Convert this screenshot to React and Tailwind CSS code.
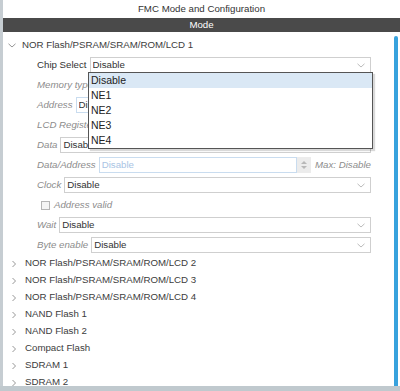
import React from "react";

const font = { fontFamily: '"Liberation Sans", Arial, sans-serif' };

function ChevronRight() {
  return (
    <svg width="6" height="8" viewBox="0 0 6 8" className="shrink-0">
      <path d="M1.5 1 L4.5 4 L1.5 7" fill="none" stroke="#8a8a8a" strokeWidth="0.9" />
    </svg>
  );
}

function ChevronDown({ color = "#8a8a8a" }) {
  return (
    <svg width="8" height="5" viewBox="0 0 8 5" className="shrink-0">
      <path d="M0.5 0.8 L4 4 L7.5 0.8" fill="none" stroke={color} strokeWidth="0.9" />
    </svg>
  );
}

function Select({ value = "Disable", border = "border-[#cfcfcf]" }) {
  return (
    <div className={`flex-1 h-[16px] border ${border} bg-white flex items-center pl-[2px] pr-[5px]`}>
      <span className="flex-1 text-[#333] truncate">{value}</span>
      <ChevronDown color="#b4b4b4" />
    </div>
  );
}

function Row({ label, italic = true, children }) {
  return (
    <div className="flex items-center h-[16px] shrink-0 pl-[34px] pr-[23px]">
      <span className={`${italic ? "italic text-[#8c8c8c]" : "text-[#333]"} mr-[3px] whitespace-nowrap`}>{label}</span>
      {children}
    </div>
  );
}

function Node({ label }) {
  return (
    <div className="flex items-center h-[17px] shrink-0 pl-[8px]">
      <span className="w-[14px] flex justify-start"><ChevronRight /></span>
      <span className="text-[#3c3c3c] whitespace-nowrap">{label}</span>
    </div>
  );
}

export default function App() {
  const nodes = [
    "NOR Flash/PSRAM/SRAM/ROM/LCD 2",
    "NOR Flash/PSRAM/SRAM/ROM/LCD 3",
    "NOR Flash/PSRAM/SRAM/ROM/LCD 4",
    "NAND Flash 1",
    "NAND Flash 2",
    "Compact Flash",
    "SDRAM 1",
    "SDRAM 2",
  ];

  return (
    <div className="w-[400px] h-[391px] bg-white flex flex-col text-[9.7px] overflow-hidden" style={font}>
      <div className="flex flex-1 min-h-0">
        {/* left edge */}
        <div className="w-[3px] bg-[#c6cdd2] shrink-0" />

        <div className="flex-1 flex flex-col min-w-0">
          <div className="h-[18px] shrink-0 flex items-center justify-center text-[#333]">FMC Mode and Configuration</div>
          <div className="h-[14px] shrink-0 bg-[#4a4a4a] flex items-center justify-center text-white">Mode</div>

          <div className="flex flex-1 min-h-0">
            <div className="flex-1 flex flex-col overflow-hidden">
              <div className="flex items-center h-[18px] shrink-0 mt-[4px] pl-[5px]">
                <span className="w-[14px] flex justify-start"><ChevronDown /></span>
                <span className="text-[#3c3c3c] whitespace-nowrap">NOR Flash/PSRAM/SRAM/ROM/LCD 1</span>
              </div>

              <div className="flex flex-col shrink-0 gap-[4px] pt-[3px] relative">
                <Row label="Chip Select" italic={false}>
                  <Select />
                </Row>
                <Row label="Memory type">
                  <Select />
                </Row>
                <Row label="Address">
                  <Select border="border-[#c9dcef]" />
                </Row>
                <Row label="LCD Register">
                  <Select />
                </Row>
                <Row label="Data">
                  <Select />
                </Row>
                <Row label="Data/Address">
                  <div className="flex-1 flex h-[16px]">
                    <div className="flex-1 border border-[#c9dcef] flex items-center pl-[2px] text-[#a9c4e4]">Disable</div>
                    <div className="w-[14px] bg-[#ececec] flex flex-col items-center justify-center gap-[2px]">
                      <svg width="6" height="3" viewBox="0 0 6 3"><path d="M0 3 L3 0 L6 3 Z" fill="#b8b8b8" /></svg>
                      <svg width="6" height="3" viewBox="0 0 6 3"><path d="M0 0 L3 3 L6 0 Z" fill="#b8b8b8" /></svg>
                    </div>
                  </div>
                  <span className="italic text-[#8c8c8c] ml-[4px] whitespace-nowrap">Max: Disable</span>
                </Row>
                <Row label="Clock">
                  <Select />
                </Row>
                <div className="flex items-center h-[16px] shrink-0 pl-[38px]">
                  <span className="w-[9px] h-[9px] border border-[#b5b5b5] bg-[#f4f4f4] mr-[4px]" />
                  <span className="italic text-[#8c8c8c]">Address valid</span>
                </div>
                <Row label="Wait">
                  <Select />
                </Row>
                <Row label="Byte enable">
                  <Select />
                </Row>

                {/* open dropdown list */}
                <div className="absolute left-[85px] top-[18px] w-[285px] border border-[#555] bg-white shadow-[2px_2px_1px_rgba(0,0,0,0.15)]">
                  {["Disable", "NE1", "NE2", "NE3", "NE4"].map((o, i) => (
                    <div
                      key={o}
                      className={`h-[15px] flex items-center pl-[2px] text-[10.5px] text-[#222] ${i === 0 ? "bg-[#dae8f5]" : ""}`}
                    >
                      {o}
                    </div>
                  ))}
                </div>
              </div>

              <div className="flex flex-col shrink-0 mt-[2px]">
                {nodes.map((n) => (
                  <Node key={n} label={n} />
                ))}
              </div>
            </div>

            {/* scrollbar */}
            <div className="w-[6px] shrink-0 flex pt-[4px]">
              <div className="w-[4px] h-full bg-[#38a2dd] rounded-t-[2px]" />
            </div>
          </div>
        </div>
      </div>
      <div className="h-[5px] bg-[#c0c9ce] shrink-0" />
    </div>
  );
}
